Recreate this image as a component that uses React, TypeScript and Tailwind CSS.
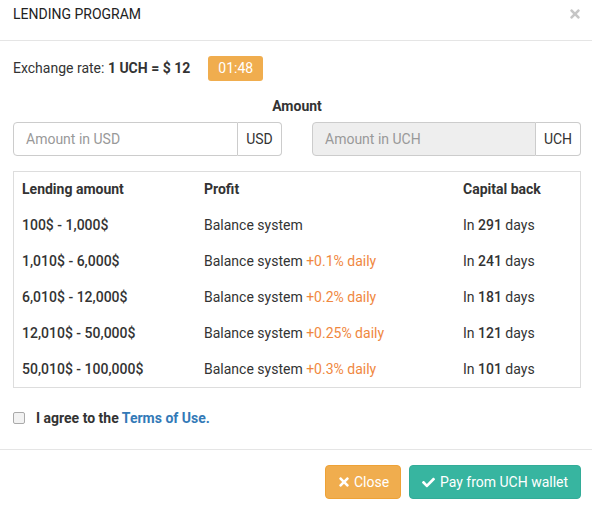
import React from "react";
import { FaTimes, FaCheck } from "react-icons/fa";

const rows = [
  { range: "100$ - 1,000$", extra: "", days: "291" },
  { range: "1,010$ - 6,000$", extra: "+0.1% daily", days: "241" },
  { range: "6,010$ - 12,000$", extra: "+0.2% daily", days: "181" },
  { range: "12,010$ - 50,000$", extra: "+0.25% daily", days: "121" },
  { range: "50,010$ - 100,000$", extra: "+0.3% daily", days: "101" },
];

export default function App() {
  return (
    <div className="w-[592px] h-[509px] bg-white text-[#333] text-[14px] overflow-hidden" style={{ fontFamily: "Roboto, 'Liberation Sans', sans-serif" }}>
      {/* header */}
      <div className="h-[41px] border-b border-[#e5e5e5] flex items-center justify-between pl-[13px] pr-[10px]">
        <div className="text-[14px] leading-none pb-[12px] text-[#222]">LENDING PROGRAM</div>
        <FaTimes className="w-[14px] h-[14px] text-[#c6c6c6] mb-[12px]" />
      </div>
      {/* body */}
      <div className="pl-[13px] pr-[11px] pt-[15px]">
        <div className="flex items-center h-[25px]">
          <span>Exchange rate: <b className="font-bold">1 UCH = $ 12</b></span>
          <span className="ml-[18px] h-[25px] w-[55px] rounded-[3px] bg-[#f0ad4e] text-white flex items-center justify-center text-[14px]">01:48</span>
        </div>
        <div className="text-center font-bold mt-[16px] h-[18px] leading-[18px]">Amount</div>
        <div className="flex justify-between mt-[7px]">
          <div className="flex w-[269px] h-[34px]">
            <div className="flex-1 border border-[#ccc] rounded-l-[4px] flex items-center pl-[12px] text-[#999]">Amount in USD</div>
            <div className="w-[44px] border border-l-0 border-[#ccc] rounded-r-[4px] flex items-center justify-center">USD</div>
          </div>
          <div className="flex w-[269px] h-[34px]">
            <div className="flex-1 border border-[#ccc] bg-[#eee] rounded-l-[4px] flex items-center pl-[12px] text-[#999]">Amount in UCH</div>
            <div className="w-[45px] border border-l-0 border-[#ccc] rounded-r-[4px] flex items-center justify-center">UCH</div>
          </div>
        </div>
        <div className="mt-[15px] border border-[#ddd]">
          <div className="grid grid-cols-[182px_259px_1fr] h-[35px] items-center font-bold">
            <div className="pl-[8px]">Lending amount</div>
            <div className="pl-[8px]">Profit</div>
            <div className="pl-[8px]">Capital back</div>
          </div>
          {rows.map((r) => (
            <div key={r.range} className="grid grid-cols-[182px_259px_1fr] h-[36px] items-center">
              <div className="pl-[8px] font-medium">{r.range}</div>
              <div className="pl-[8px]">
                Balance system{r.extra && <span className="text-[#f0883e]"> {r.extra}</span>}
              </div>
              <div className="pl-[8px]">In <span className="font-medium">{r.days}</span> days</div>
            </div>
          ))}
        </div>
        <div className="flex items-center mt-[23px] h-[14px]">
          <span className="w-[12px] h-[12px] rounded-[2px] border border-[#aaa] bg-[#f2f2f2]" />
          <span className="ml-[11px] font-bold">I agree to the <span className="text-[#337ab7]">Terms of Use.</span></span>
        </div>
      </div>
      {/* footer */}
      <div className="mt-[24px] border-t border-[#e5e5e5] flex justify-end gap-[8px] pr-[11px] pt-[15px]">
        <button className="h-[34px] w-[76px] rounded-[4px] bg-[#f0ad4e] border border-[#eea236] text-white flex items-center justify-center gap-[3px]">
          <FaTimes className="w-[14px] h-[14px]" />
          <span>Close</span>
        </button>
        <button className="h-[34px] w-[172px] rounded-[4px] bg-[#37b5a0] border border-[#33ac98] text-white flex items-center justify-center gap-[5px]">
          <FaCheck className="w-[13px] h-[13px]" />
          <span>Pay from UCH wallet</span>
        </button>
      </div>
    </div>
  );
}
